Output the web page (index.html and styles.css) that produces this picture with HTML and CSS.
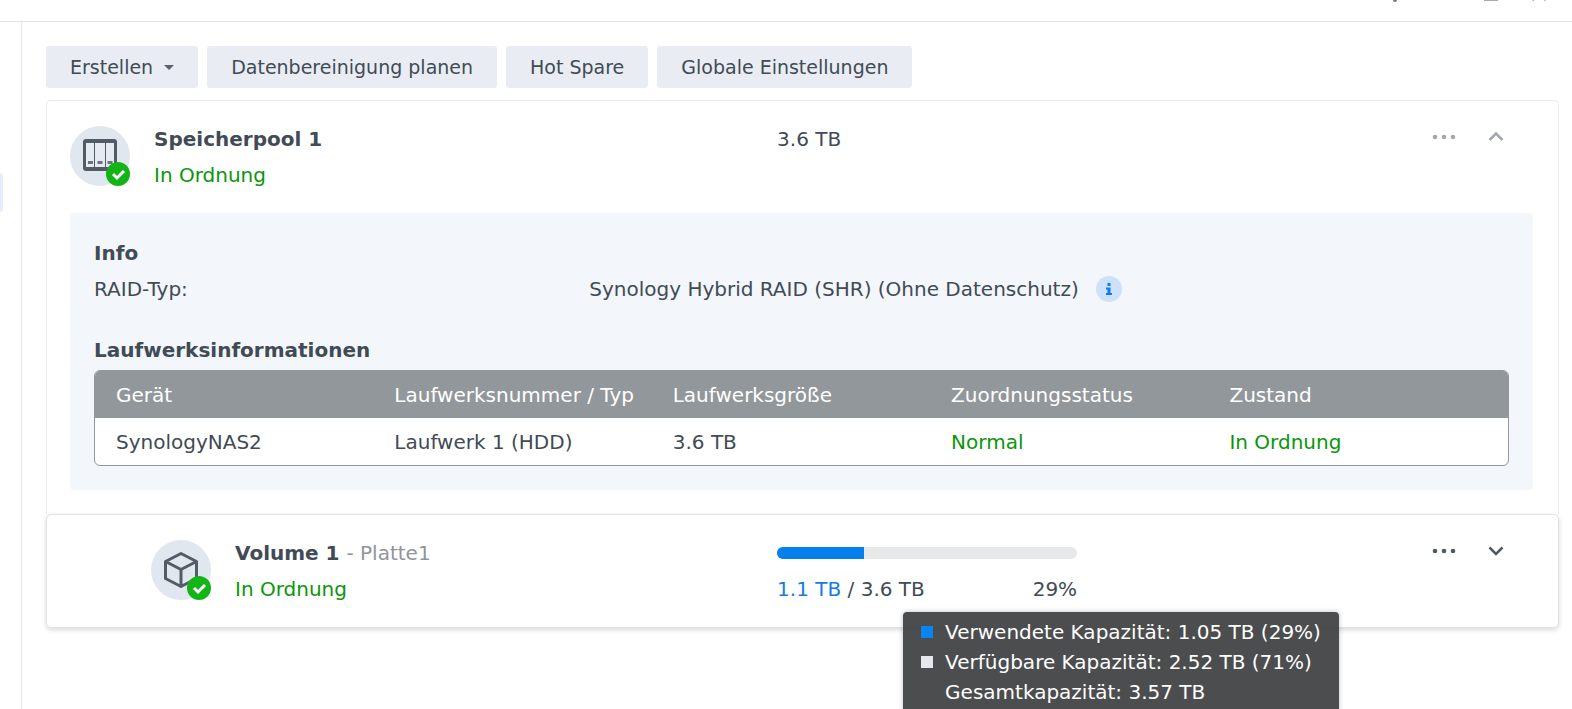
FILE: index.html
```html
<!DOCTYPE html>
<html lang="de">
<head>
    <meta charset="UTF-8">
    <meta name="viewport" content="width=device-width, initial-scale=1.0">
    <title>Speicher-Manager</title>
    <link rel="stylesheet" href="styles.css">
</head>
<body>
    <div class="window">
        <!-- Window controls -->
        <header class="titlebar">
            <button type="button" class="win-btn" aria-label="Hilfe">
                <svg width="16" height="16" viewBox="0 0 16 16"><path d="M4 4a4 4 0 1 1 4 4v3" fill="none" stroke="#777" stroke-width="2"/><circle cx="8" cy="14" r="2" fill="#777"/></svg>
            </button>
            <button type="button" class="win-btn" aria-label="Minimieren">
                <svg width="16" height="16" viewBox="0 0 16 16"><path d="M1 8h14" stroke="#aaa" stroke-width="2"/></svg>
            </button>
            <button type="button" class="win-btn" aria-label="Maximieren">
                <svg width="16" height="16" viewBox="0 0 16 16"><rect x="2" y="2" width="12" height="12" fill="none" stroke="#aaa" stroke-width="2"/></svg>
            </button>
            <button type="button" class="win-btn" aria-label="Schließen">
                <svg width="16" height="16" viewBox="0 0 16 16"><path d="M2 2l12.500 12.500M14 2L1.500 14.500" stroke="#aaa" stroke-width="2"/></svg>
            </button>
        </header>

        <div class="body">
            <nav class="sidebar">
                <div class="sidebar-active"></div>
            </nav>

            <main class="content">
                <div class="toolbar">
                    <button type="button" class="btn">Erstellen
                        <svg width="10" height="5" viewBox="0 0 10 5"><path d="M0 0h10L5 5z" fill="#5a626b"/></svg>
                    </button>
                    <button type="button" class="btn">Datenbereinigung planen</button>
                    <button type="button" class="btn">Hot Spare</button>
                    <button type="button" class="btn">Globale Einstellungen</button>
                </div>

                <!-- Storage pool -->
                <section class="pool">
                    <div class="row">
                        <div class="summary">
                            <svg class="icon" width="60" height="60" viewBox="0 0 60 60">
                                <circle cx="30" cy="30" r="30" fill="#e1e7ee"/>
                                <rect x="13" y="13" width="34" height="32" rx="3" fill="#535c66"/>
                                <path d="M16 17h8v24h-8zM25 17h10v24H25zM36 17h8v24h-8z" fill="#e6ebf1"/>
                                <path d="M18 36.500h5M27.500 36.500h5M37.500 36.500h5" stroke="#6a727b" stroke-width="3"/>
                                <circle cx="48" cy="48" r="12" fill="#13b516"/>
                                <path d="M43 48l4 4 7-7" fill="none" stroke="#fff" stroke-width="3"/>
                            </svg>
                            <div>
                                <h2 class="name">Speicherpool 1</h2>
                                <p class="ok">In Ordnung</p>
                            </div>
                        </div>
                        <div class="capacity">3.6 TB</div>
                        <div class="actions muted">
                            <button type="button" class="icon-btn" aria-label="Mehr">
                                <svg width="24" height="6" viewBox="0 0 24 6"><circle cx="3" cy="3" r="2.300"/><circle cx="12" cy="3" r="2.300"/><circle cx="21" cy="3" r="2.300"/></svg>
                            </button>
                            <button type="button" class="icon-btn" aria-label="Einklappen">
                                <svg width="16" height="10" viewBox="0 0 16 10"><path d="M1.500 8L8 1.500 14.500 8" fill="none" stroke="currentColor" stroke-width="2.500"/></svg>
                            </button>
                        </div>
                    </div>

                    <div class="details">
                        <h3 class="heading">Info</h3>
                        <div class="info-row">
                            <span>RAID-Typ:</span>
                            <span class="info-value">Synology Hybrid RAID (SHR) (Ohne Datenschutz)
                                <svg width="28" height="28" viewBox="0 0 28 28"><circle cx="14" cy="14" r="13" fill="#cde2f8"/><path d="M12.500 8h3v3h-3zM11 12.500h4.500V18H17v2h-6v-2h1.500v-3.500H11z" fill="#0a7cec"/></svg>
                            </span>
                        </div>

                        <h3 class="heading">Laufwerksinformationen</h3>
                        <table class="drives">
                            <thead>
                                <tr>
                                    <th>Gerät</th>
                                    <th>Laufwerksnummer / Typ</th>
                                    <th>Laufwerksgröße</th>
                                    <th>Zuordnungsstatus</th>
                                    <th>Zustand</th>
                                </tr>
                            </thead>
                            <tbody>
                                <tr>
                                    <td>SynologyNAS2</td>
                                    <td>Laufwerk 1 (HDD)</td>
                                    <td>3.6 TB</td>
                                    <td class="ok">Normal</td>
                                    <td class="ok">In Ordnung</td>
                                </tr>
                            </tbody>
                        </table>
                    </div>
                </section>

                <!-- Volume -->
                <section class="volume">
                    <div class="row">
                        <div class="summary nested">
                            <svg class="icon" width="60" height="60" viewBox="0 0 60 60">
                                <circle cx="30" cy="30" r="30" fill="#e1e7ee"/>
                                <path d="M30 13.500l15.500 8v17L30 46.500l-15.500-8v-17zM14.500 21.500l15.500 8 15.500-8M30 29.500v17" fill="none" stroke="#535c66" stroke-width="3" stroke-linejoin="round"/>
                                <circle cx="48" cy="48" r="12" fill="#13b516"/>
                                <path d="M43 48l4 4 7-7" fill="none" stroke="#fff" stroke-width="3"/>
                            </svg>
                            <div>
                                <h2 class="name">Volume 1 <span class="desc">- Platte1</span></h2>
                                <p class="ok">In Ordnung</p>
                            </div>
                        </div>
                        <div class="usage">
                            <div class="bar"><div class="bar-fill" style="width: 29%"></div></div>
                            <div class="usage-text">
                                <span><span class="used">1.1 TB</span> / 3.6 TB</span>
                                <span>29%</span>
                            </div>
                            <div class="tooltip" role="tooltip">
                                <div class="tip-row"><i class="swatch swatch-used"></i>Verwendete Kapazität: 1.05 TB (29%)</div>
                                <div class="tip-row"><i class="swatch swatch-free"></i>Verfügbare Kapazität: 2.52 TB (71%)</div>
                                <div class="tip-row"><i class="swatch"></i>Gesamtkapazität: 3.57 TB</div>
                            </div>
                        </div>
                        <div class="actions">
                            <button type="button" class="icon-btn" aria-label="Mehr">
                                <svg width="24" height="6" viewBox="0 0 24 6"><circle cx="3" cy="3" r="2.300"/><circle cx="12" cy="3" r="2.300"/><circle cx="21" cy="3" r="2.300"/></svg>
                            </button>
                            <button type="button" class="icon-btn" aria-label="Ausklappen">
                                <svg width="16" height="10" viewBox="0 0 16 10"><path d="M1.500 1.500L8 8l6.500-6.500" fill="none" stroke="currentColor" stroke-width="2.500"/></svg>
                            </button>
                        </div>
                    </div>
                </section>
            </main>
        </div>
    </div>
</body>
</html>
```
FILE: styles.css
```css
* {
    box-sizing: border-box;
}
body {
    margin: 0;
    font-family: Verdana, "DejaVu Sans", sans-serif;
    font-size: 20px;
    line-height: 36px;
    color: #414b55;
    background: #fff;
}
h2, h3, p {
    margin: 0;
    font-size: inherit;
}
button {
    font: inherit;
    color: inherit;
    border: none;
    cursor: pointer;
}
.window {
    display: flex;
    flex-direction: column;
    height: 100vh;
    overflow: hidden;
}
.titlebar {
    display: flex;
    justify-content: flex-end;
    align-items: flex-start;
    gap: 32px;
    flex: none;
    height: 22px;
    padding-right: 25px;
    overflow: hidden;
    border-bottom: 1px solid #e3e5e7;
}
.win-btn {
    display: flex;
    margin-top: -14px;
    padding: 0;
    background: none;
}
.body {
    display: flex;
    flex: 1;
}
.sidebar {
    flex: none;
    width: 22px;
    padding-top: 151px;
    border-right: 1px solid #e3e5e7;
}
.sidebar-active {
    width: 3px;
    height: 39px;
    border-radius: 0 3px 3px 0;
    background: #e2f0fd;
}
.content {
    flex: 1;
    min-width: 0;
    padding: 24px 13px 0 24px;
}
.toolbar {
    display: flex;
    gap: 9px;
    margin-bottom: 12px;
}
.btn {
    display: flex;
    align-items: center;
    gap: 11px;
    height: 42px;
    padding: 0 24px;
    border-radius: 3px;
    background: #e9edf3;
    font-size: 19px;
    white-space: nowrap;
}
.pool {
    padding-bottom: 24px;
    border: 1px solid #e8eaec;
    border-bottom: none;
    border-radius: 5px 5px 0 0;
}
.row {
    display: grid;
    grid-template-columns: 48.3% 300px 1fr;
    padding: 20px 24px 20px 23px;
}
.summary {
    display: flex;
    gap: 24px;
}
.nested {
    padding-left: 81px;
}
.icon {
    flex: none;
    margin-top: 5px;
}
.name {
    font-weight: bold;
}
.desc {
    font-weight: normal;
    color: #8f959b;
}
.ok {
    color: #0a960a;
}
.actions {
    display: flex;
    justify-content: flex-end;
    gap: 20px;
    padding-right: 22px;
    color: #505a64;
}
.muted {
    color: #a4a8ac;
}
.icon-btn {
    display: flex;
    align-items: center;
    justify-content: center;
    width: 32px;
    height: 32px;
    padding: 0;
    background: none;
}
.icon-btn svg {
    fill: currentColor;
}

/* Pool details */
.details {
    margin: 0 25px 0 23px;
    padding: 22px 24px 24px;
    border-radius: 4px;
    background: #f3f6fa;
}
.info-row {
    display: grid;
    grid-template-columns: 35% 1fr;
    margin-bottom: 25px;
}
.info-value {
    display: flex;
    align-items: center;
    gap: 16px;
}
.drives {
    width: 100%;
    margin-top: 2px;
    table-layout: fixed;
    border: 1px solid #92979b;
    border-radius: 6px;
    border-spacing: 0;
    overflow: hidden;
    background: #fff;
}
.drives th,
.drives td {
    height: 47px;
    padding: 0 0 0 21px;
    text-align: left;
    font-weight: normal;
    white-space: nowrap;
}
.drives th {
    width: 19.7%;
    color: #fff;
    background: #92979b;
}
.drives th:last-child {
    width: auto;
}

/* Volume */
.volume {
    border: 1px solid #e0e3e6;
    border-radius: 5px;
    background: #fff;
    box-shadow: 0 2px 5px rgba(0, 0, 0, 0.15);
}
.usage {
    position: relative;
    padding-top: 12px;
}
.bar {
    height: 12px;
    border-radius: 6px;
    background: #e7e8e9;
    overflow: hidden;
}
.bar-fill {
    height: 100%;
    background: #057feb;
}
.usage-text {
    display: flex;
    justify-content: space-between;
    padding-top: 12px;
}
.used {
    color: #147ee0;
}
.tooltip {
    position: absolute;
    top: 77px;
    left: 126px;
    padding: 5px 18px;
    border-radius: 4px;
    background: rgba(66, 67, 69, 0.95);
    box-shadow: 0 0 5px rgba(0, 0, 0, 0.25);
    color: #fff;
    line-height: 30px;
    white-space: nowrap;
}
.tip-row {
    display: flex;
    align-items: center;
    gap: 12px;
}
.swatch {
    width: 12px;
    height: 12px;
}
.swatch-used {
    background: #0a84f0;
}
.swatch-free {
    background: #e4e8ee;
}
```
